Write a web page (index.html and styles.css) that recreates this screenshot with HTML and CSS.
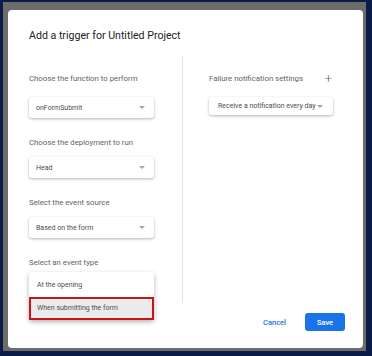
FILE: index.html
```html
<!DOCTYPE html>
<html lang="en">
<head>
    <meta charset="UTF-8">
    <title>Add a trigger</title>
    <meta name="viewport" content="width=device-width, initial-scale=1.0">
    <link rel="stylesheet" href="styles.css">
</head>
<body>
    <div class="backdrop">
        <div class="dialog">
            <h1 class="title">Add a trigger for Untitled Project</h1>
            <div class="columns">
                <!-- Left: function, deployment, source, type -->
                <section class="col col-left">
                    <div class="label first">Choose the function to perform</div>
                    <div class="select"><span>onFormSubmit</span><span class="caret"></span></div>

                    <div class="label">Choose the deployment to run</div>
                    <div class="select"><span>Head</span><span class="caret"></span></div>

                    <div class="label">Select the event source</div>
                    <div class="select"><span>Based on the form</span><span class="caret"></span></div>

                    <div class="label">Select an event type</div>
                    <div class="menu">
                        <div class="menu-item">At the opening</div>
                        <div class="menu-item selected">When submitting the form</div>
                    </div>
                </section>
                <!-- Right: failure notifications -->
                <section class="col col-right">
                    <div class="label first row">
                        <span>Failure notification settings</span>
                        <span class="plus">+</span>
                    </div>
                    <div class="select wide"><span>Receive a notification every day</span><span class="caret"></span></div>
                </section>
            </div>
            <div class="footer">
                <button class="btn btn-text">Cancel</button>
                <button class="btn btn-primary">Save</button>
            </div>
        </div>
    </div>
</body>
</html>
```

FILE: styles.css
```css
:root {
    --navy: #0b1d47;
    --scrim: #6c6c6c;
    --blue: #1a73e8;
    --text: #202124;
    --label: #5f6368;
    --value: #4a4d51;
}
body {
    margin: 0;
    background: var(--navy);
    font-family: Roboto, "Noto Sans", sans-serif;
}
.backdrop {
    margin: 2px 6px 5px 3px;
    height: 349px;
    box-sizing: border-box;
    padding: 8px 3px 3px 5px;
    background: var(--scrim);
}
.dialog {
    height: 338px;
    background: #fff;
    border-radius: 4px;
    display: flex;
    flex-direction: column;
}
.title {
    margin: 0;
    padding: 19px 0 0 21px;
    font-size: 10.6px;
    line-height: 14px;
    font-weight: 400;
    color: var(--text);
}
.columns {
    display: flex;
    margin-top: 13px;
    height: 247px;
}
.col-left {
    width: 153px;
    padding-left: 21px;
    border-right: 1px solid #e3e3e3;
}
.col-right {
    padding-left: 26px;
    width: 124px;
}
.label {
    font-size: 7.8px;
    line-height: 10px;
    color: var(--label);
    margin: 20px 0 9px 0;
}
.label.first {
    margin-top: 18px;
    margin-bottom: 13px;
}
.row {
    display: flex;
    justify-content: space-between;
    align-items: center;
}
.plus {
    font-size: 13px;
    font-weight: 300;
    color: #5f6368;
    margin-right: 1px;
}
.select {
    width: 125px;
    height: 21px;
    box-sizing: border-box;
    padding: 0 9px 0 7px;
    display: flex;
    align-items: center;
    justify-content: space-between;
    background: #fff;
    border-radius: 3px;
    box-shadow: 0 1px 3px rgba(0, 0, 0, 0.3);
    font-size: 7px;
    color: var(--value);
}
.select.wide {
    width: 124px;
    height: 18px;
    padding: 0 10px 0 9px;
}
.caret {
    width: 0;
    height: 0;
    border-left: 3px solid transparent;
    border-right: 3px solid transparent;
    border-top: 3px solid #a0a4a8;
}
.menu {
    width: 125px;
    margin-top: -5px;
    padding-top: 2px;
    background: #fff;
    border-radius: 3px;
    box-shadow: 0 2px 5px rgba(0, 0, 0, 0.3);
}
.menu-item {
    height: 23px;
    line-height: 23px;
    padding-left: 8px;
    font-size: 7px;
    color: var(--value);
}
.menu-item.selected {
    background: #ebebeb;
    outline: 2px solid #c8141b;
    outline-offset: -2px;
}
.footer {
    display: flex;
    justify-content: flex-end;
    align-items: center;
    gap: 11px;
    padding: 10px 18px 0 0;
}
.btn {
    font-family: Roboto, "Noto Sans", sans-serif;
    font-size: 7.5px;
    font-weight: 500;
    border: none;
    border-radius: 3px;
    height: 18px;
    cursor: pointer;
}
.btn-text {
    background: none;
    color: var(--blue);
    padding: 0 8px;
}
.btn-primary {
    width: 40px;
    background: var(--blue);
    color: #fff;
}
```
